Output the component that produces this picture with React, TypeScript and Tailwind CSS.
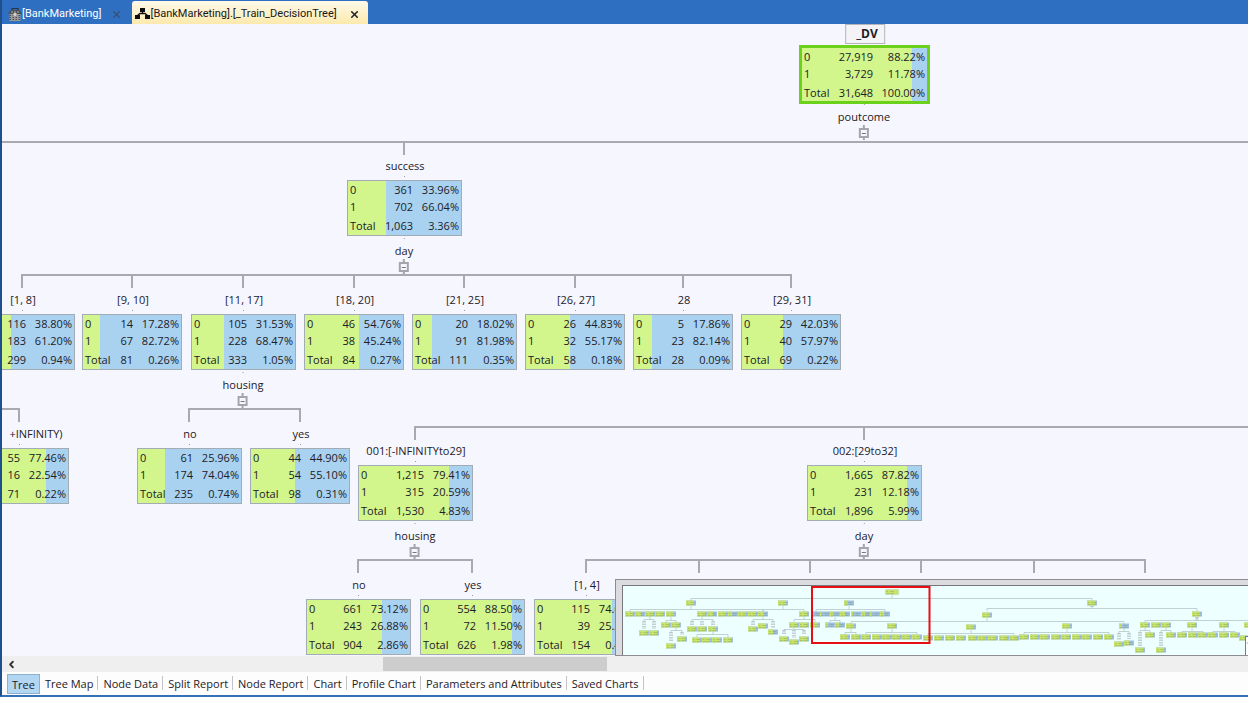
import { X, ChevronLeft } from "lucide-react";

type Row = [string, string, string];

interface TreeNode {
  x: number;
  y: number;
  width: number;
  label: string;
  labelX?: number;
  share: number;
  rows: Row[];
  split?: string;
  root?: boolean;
  offEdge?: boolean;
}

const rows = (a: string, ap: string, b: string, bp: string, t: string, tp: string): Row[] => [
  ["0", a, ap],
  ["1", b, bp],
  ["Total", t, tp],
];

/* x is the centre of a node and y the top of its box, both on the canvas. */
const nodes: TreeNode[] = [
  { x: 862, y: 21, width: 131, label: "_DV", share: 88.22, rows: rows("27,919", "88.22%", "3,729", "11.78%", "31,648", "100.00%"), split: "poutcome", root: true },
  { x: 402, y: 156, width: 115, label: "success", share: 33.96, rows: rows("361", "33.96%", "702", "66.04%", "1,063", "3.36%"), split: "day" },
  { x: 20, y: 290, width: 105, label: "[1, 8]", share: 38.8, rows: rows("116", "38.80%", "183", "61.20%", "299", "0.94%"), offEdge: true },
  { x: 130, y: 290, width: 100, label: "[9, 10]", share: 17.28, rows: rows("14", "17.28%", "67", "82.72%", "81", "0.26%") },
  { x: 241, y: 290, width: 105, label: "[11, 17]", share: 31.53, rows: rows("105", "31.53%", "228", "68.47%", "333", "1.05%"), split: "housing" },
  { x: 352, y: 290, width: 100, label: "[18, 20]", share: 54.76, rows: rows("46", "54.76%", "38", "45.24%", "84", "0.27%") },
  { x: 462, y: 290, width: 105, label: "[21, 25]", share: 18.02, rows: rows("20", "18.02%", "91", "81.98%", "111", "0.35%") },
  { x: 573, y: 290, width: 100, label: "[26, 27]", share: 44.83, rows: rows("26", "44.83%", "32", "55.17%", "58", "0.18%") },
  { x: 681, y: 290, width: 100, label: "28", share: 17.86, rows: rows("5", "17.86%", "23", "82.14%", "28", "0.09%") },
  { x: 789, y: 290, width: 100, label: "[29, 31]", share: 42.03, rows: rows("29", "42.03%", "40", "57.97%", "69", "0.22%") },
  { x: 17, y: 424, width: 100, label: "+INFINITY)", labelX: 34, share: 77.46, rows: rows("55", "77.46%", "16", "22.54%", "71", "0.22%"), offEdge: true },
  { x: 187, y: 424, width: 105, label: "no", share: 25.96, rows: rows("61", "25.96%", "174", "74.04%", "235", "0.74%") },
  { x: 298, y: 424, width: 100, label: "yes", share: 44.9, rows: rows("44", "44.90%", "54", "55.10%", "98", "0.31%") },
  { x: 413, y: 441, width: 115, label: "001:[-INFINITYto29]", share: 79.41, rows: rows("1,215", "79.41%", "315", "20.59%", "1,530", "4.83%"), split: "housing" },
  { x: 862, y: 441, width: 115, label: "002:[29to32]", share: 87.82, rows: rows("1,665", "87.82%", "231", "12.18%", "1,896", "5.99%"), split: "day" },
  { x: 356, y: 575, width: 105, label: "no", share: 73.12, rows: rows("661", "73.12%", "243", "26.88%", "904", "2.86%") },
  { x: 470, y: 575, width: 105, label: "yes", share: 88.5, rows: rows("554", "88.50%", "72", "11.50%", "626", "1.98%") },
  { x: 584, y: 575, width: 105, label: "[1, 4]", share: 74.68, rows: rows("115", "74.68%", "39", "25.32%", "154", "0.49%") },
];

/* Each branch: bar height, bar start and end, and where the drops to the children hang. */
const branches = [
  { y: 117, from: -10, to: 3000, drops: [402] },
  { y: 250, from: 20, to: 789, drops: [20, 130, 241, 352, 462, 573, 681, 789] },
  { y: 384, from: -10, to: 17, drops: [17] },
  { y: 384, from: 187, to: 298, drops: [187, 298] },
  { y: 402, from: 413, to: 3000, drops: [413, 862] },
  { y: 535, from: 356, to: 470, drops: [356, 470] },
  { y: 535, from: 584, to: 1143, drops: [584, 697, 808, 919, 1032, 1143] },
];

function Branches() {
  return (
    <svg className="absolute inset-0 h-full w-full" aria-hidden="true" shapeRendering="crispEdges">
      {branches.map((b, i) => (
        <g key={i} fill="#a9a9af">
          <rect x={b.from - 1} y={b.y} width={b.to - b.from + 2} height={2} />
          {b.drops.map((d) => (
            <rect key={d} x={d - 1} y={b.y} width={2} height={14} />
          ))}
        </g>
      ))}
    </svg>
  );
}

function NodeBox({ node }: { node: TreeNode }) {
  const height = node.root ? 59 : 56;
  return (
    <>
      <div
        className={
          node.root
            ? "absolute -translate-x-1/2 border border-[#b4b4ba] bg-[#f4f4f8] pr-1.5 pl-2.5 text-[12px] leading-[18px] font-bold"
            : "absolute -translate-x-1/2 leading-4 whitespace-nowrap"
        }
        style={{ left: node.labelX ?? node.x + 1, top: node.root ? node.y - 21 : node.y - 22 }}
      >
        {node.label}
      </div>
      {!node.root && <i className="absolute h-px w-px bg-[#9a9aa2]" style={{ left: node.x, top: node.y - 4 }} />}
      <div
        className={
          node.root
            ? "absolute border-[3px] border-[#6cd11a]"
            : "absolute border border-[#a3acb4]"
        }
        style={{
          left: node.x - Math.floor(node.width / 2),
          top: node.y,
          width: node.width,
          height,
          background: `linear-gradient(to right, #d2f58c ${node.share}%, #a9d2f1 ${node.share}%)`,
        }}
      >
        <table className="w-full" aria-label={node.label}>
          <tbody>
            {node.rows.map(([name, count, pct]) => (
              <tr key={name} className="last:h-[19px] last:align-bottom">
                <th scope="row" className="w-7 p-0 pl-0.5 text-left leading-[17px] font-normal">
                  {node.offEdge ? null : name}
                </th>
                <td className="p-0 text-right leading-[17px]">{count}</td>
                <td className={node.root ? "w-[54px] p-0 pr-0.5 text-right leading-[17px]" : "w-12 p-0 pr-0.5 text-right leading-[17px]"}>{pct}</td>
              </tr>
            ))}
          </tbody>
        </table>
      </div>
      {node.split && (
        <div
          className="absolute flex -translate-x-1/2 flex-col items-center"
          style={{ left: node.x, top: node.y + (node.root ? 57 : 56) }}
        >
          <i className="mt-0.5 h-px w-px bg-[#9a9aa2]" />
          <span className="mt-1 leading-4">{node.split}</span>
          <i className="h-[3px] w-0.5 bg-[#a5a5ab]" />
          <button
            type="button"
            aria-label={`Collapse ${node.split}`}
            className="flex h-2.5 w-2.5 items-center justify-center border-2 border-[#a5a5ab] bg-[#f6f6ff]"
          >
            <i className="h-px w-1 bg-[#77777d]" />
          </button>
          <i className="h-0.5 w-0.5 bg-[#a5a5ab]" />
        </div>
      )}
    </>
  );
}

/* Overview nodes: centre x, centre y, share of green. */
type Mini = [number, number, number?];
const miniNodes: Mini[] = [
  [69, 17], [161, 17], [227, 17, 0.35], [470, 17],
  [8, 28], [18, 28, 0.6], [28, 28], [38, 28], [49, 28],
  [80, 28], [90, 28, 0.6], [101, 28], [111, 28, 0.4], [121, 28], [131, 28], [141, 28, 0.6], [182, 28],
  [194, 28, 0.3], [203, 28, 0.15], [213, 28, 0.3], [223, 28, 0.5], [234, 28, 0.2], [244, 28, 0.4], [253, 28, 0.2], [263, 28, 0.4],
  [22, 47], [32, 47], [44, 39], [54, 39], [49, 60], [60, 53],
  [70, 43], [80, 43], [91, 43], [75, 54], [85, 54], [95, 54], [106, 54],
  [131, 43], [141, 40], [151, 46, 0.5],
  [172, 39], [182, 39], [193, 39], [162, 53], [172, 56], [182, 53],
  [208, 39, 0.3], [218, 39, 0.4],
  [229, 40], [270, 40], [349, 41], [445, 40], [502, 40, 0.3],
  [365, 29], [575, 28],
  [223, 51], [234, 51], [244, 51], [255, 51], [265, 51], [275, 51], [285, 51], [295, 51],
  [306, 52], [317, 52], [328, 52], [339, 52], [351, 52], [361, 52], [371, 52], [382, 52], [392, 52],
  [402, 51], [413, 51], [423, 51], [434, 51], [444, 51], [455, 51], [465, 51], [476, 51], [487, 51],
  [497, 58], [507, 57, 0.5],
  [523, 39], [534, 39], [544, 39], [570, 39], [602, 39], [627, 39],
  [518, 64], [528, 49], [539, 64], [549, 49], [560, 49], [571, 49], [581, 49], [591, 49], [602, 49], [613, 49], [622, 52],
];

/* Overview bars: y, start, end, and the stem up to the parent. */
const miniBars: [number, number, number, number][] = [
  [12, 69, 470, 270], [23, 8, 141, 69], [23, 141, 182, 161], [23, 194, 263, 227],
  [22, 365, 575, 470], [35, 229, 502, 365], [34, 523, 627, 575],
  [33, 22, 32, 28], [34, 44, 54, 49], [44, 49, 60, 54], [33, 70, 91, 80], [48, 75, 106, 91],
  [33, 131, 151, 141], [33, 172, 193, 182], [43, 162, 182, 172], [34, 208, 218, 213],
  [46, 223, 234, 229], [46, 244, 295, 270], [47, 306, 392, 349], [46, 402, 487, 445], [45, 497, 507, 502],
  [44, 518, 528, 523], [44, 539, 549, 544], [45, 560, 581, 570], [45, 591, 613, 602],
];

/* Small condition marks stacked above some deep leaves. */
const miniMarks: [number, number, number][] = [
  [22, 35, 43], [32, 35, 43], [49, 46, 56], [60, 46, 49], [70, 35, 39], [80, 35, 39], [91, 35, 39],
  [131, 35, 39], [151, 35, 42], [162, 44, 49], [172, 44, 52], [182, 44, 49],
  [497, 47, 54], [507, 47, 53], [518, 46, 60], [539, 46, 60], [470, 20, 21], [575, 31, 34],
];

function Overview() {
  return (
    <div className="absolute right-0 bottom-0 h-[77px] w-[633px] border-y border-l border-[#8c8c92] bg-[#dcdce0] pt-[5px] pl-1.5">
      <div className="h-full w-full overflow-hidden border-t border-l border-[#77777d] bg-[#eeffff]">
        <svg width="626" height="69" viewBox="1 0 626 69" role="img" aria-label="Tree overview" className="block">
          {miniBars.map(([y, a, b, p], i) => (
            <path key={i} d={`M${a} ${y + 3}V${y + 0.5}H${b}V${y + 3}M${p} ${y + 0.5}V${y - 3}`} fill="none" stroke="#b4c6c6" strokeWidth="0.8" />
          ))}
          {miniMarks.map(([x, a, b], i) => (
            <path key={i} d={`M${x} ${a}V${b}`} stroke="#a7b4b8" strokeWidth="4" strokeDasharray="1.5 1" opacity="0.6" />
          ))}
          {[[270, 6, 1] as Mini, ...miniNodes].map(([x, y, s = 0.8], i) => {
            const w = i === 0 ? 13 : 10;
            return (
              <g key={i}>
                <rect x={x - w / 2} y={y - 2.5} width={w} height="5" fill="#9dbfe2" />
                <rect x={x - w / 2} y={y - 2.5} width={w * s} height="5" fill="#c8e46c" />
                <path d={`M${x - w / 2 + 1} ${y - 0.5}h1.5m2 0h4M${x - w / 2 + 1} ${y + 1.5}h2.5m1 0h4`} stroke="#7c9458" strokeWidth="0.8" opacity="0.5" />
              </g>
            );
          })}
          <rect x="190" y="1" width="117.5" height="56" fill="none" stroke="#e80f14" strokeWidth="2" />
          <rect x="623.5" y="50.5" width="8" height="30" fill="#fff" stroke="#4a86b8" />
          <path d="M625.5 57h1.500" stroke="#333" />
        </svg>
      </div>
    </div>
  );
}

function DatabaseIcon() {
  return (
    <svg width="14" height="15" viewBox="0 0 14 15" aria-hidden="true" className="shrink-0">
      <path d="M4 3.500V1.500h6v2" fill="none" stroke="#2b333f" strokeWidth="1.200" />
      <path d="M.5 6 3 3h8l2.500 3v1H.5z" fill="#4a4f58" />
      <path d="M3 5h8" stroke="#b9b6ac" strokeDasharray="2 1" />
      <path d="M1.500 7h11v7h-11z" fill="#9a9a98" />
      <path d="M1.500 8.500h11M1.500 10.500h11M1.500 12.500h11" stroke="#4a4f58" strokeDasharray="1.500 1.500" />
      <path d="M5.500 6h3v3h-3z" fill="#d0d0c8" />
    </svg>
  );
}

function TreeIcon() {
  return (
    <svg width="15" height="12" viewBox="0 0 15 12" aria-hidden="true" className="shrink-0">
      <path d="M5 0h5v4H5zM0 7h5v4H0zM10 7h5v4h-5z" fill="#0c0c0c" />
      <path d="M7.500 4v2M2.500 7.500 5 5.500h5l2.500 2" fill="none" stroke="#0c0c0c" strokeWidth="1.300" />
    </svg>
  );
}

const views = ["Tree", "Tree Map", "Node Data", "Split Report", "Node Report", "Chart", "Profile Chart", "Parameters and Attributes", "Saved Charts"];

export default function App() {
  return (
    <div className="min-h-screen bg-white pb-[5px] font-['Open_Sans',sans-serif] text-[11px] text-[#1c2026]">
      <div className="flex min-h-[calc(100vh-5px)] flex-col border-b-2 border-l-2 border-b-[#3470b4] border-l-[#1f4f8c] bg-[#fdfdfe]">
        <header className="flex h-6 items-end bg-[#2e6fc1] pl-1.5 font-[Roboto,sans-serif]">
          <div className="flex h-[22px] items-center pt-0.5 text-white">
            <DatabaseIcon />
            <button type="button" className="whitespace-nowrap">[BankMarketing]</button>
            <button type="button" aria-label="Close BankMarketing" className="ml-2.5 text-[#3b5270]">
              <X size={11} strokeWidth={3} />
            </button>
          </div>
          <div className="ml-2.5 flex h-[23px] items-center rounded-t-[3px] bg-linear-to-b from-[#fffaea] to-[#fce9ac] pt-[3px] pr-2 pl-[3px] text-[#16181c]">
            <TreeIcon />
            <button type="button" className="whitespace-nowrap">[BankMarketing].[_Train_DecisionTree]</button>
            <button type="button" aria-label="Close decision tree" className="ml-3 text-[#25252a]">
              <X size={11} strokeWidth={3.5} />
            </button>
          </div>
        </header>

        <main className="relative min-h-[632px] flex-1 overflow-hidden bg-[#f6f6ff]">
          <Branches />
          {nodes.map((n) => (
            <NodeBox key={`${n.x}-${n.y}`} node={n} />
          ))}
          <Overview />
        </main>

        <div className="flex h-4 items-center bg-[#efeff0]">
          <button type="button" aria-label="Scroll left" className="w-[18px] pl-1 text-[#333]">
            <ChevronLeft size={11} strokeWidth={4} />
          </button>
          <div className="h-3.5 flex-1">
            <div className="ml-[29.6%] h-full w-[18.2%] bg-[#cdcdcd]" />
          </div>
        </div>

        <nav className="flex h-[23px] items-center pl-[5px]">
          {views.map((v, i) => (
            <button
              key={v}
              type="button"
              className={
                i === 0
                  ? "h-5 border border-[#8fb0cc] bg-[#b3d7f2] px-1 pt-0.5 whitespace-nowrap"
                  : "relative h-5 px-[5px] pt-0.5 whitespace-nowrap after:absolute after:top-0.5 after:right-0 after:h-3.5 after:w-px after:bg-[#c4c4c8]"
              }
            >
              {v}
            </button>
          ))}
        </nav>
      </div>
    </div>
  );
}
